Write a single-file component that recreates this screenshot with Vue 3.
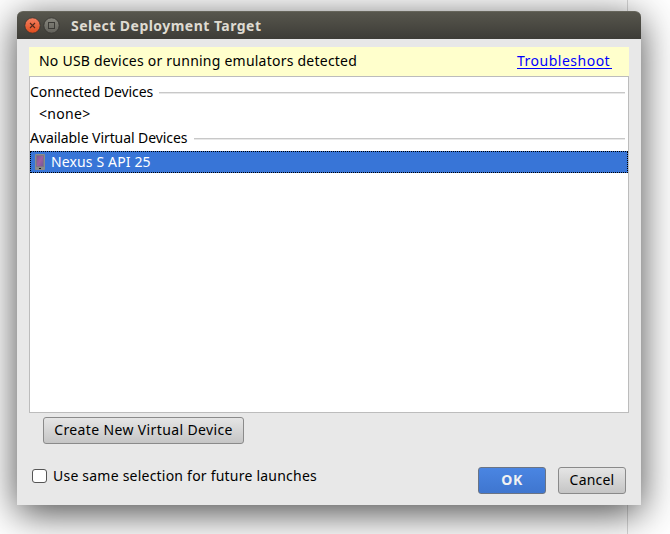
<script setup>
import { ref } from 'vue'

const reuseSelection = ref(false)
const virtualDevices = [{ name: 'Nexus S API 25', selected: true }]
</script>

<template>
  <main class="desktop">
    <section class="window" role="dialog" aria-labelledby="title">
      <header class="titlebar">
        <svg class="control" viewBox="0 0 17 17">
          <defs>
            <linearGradient id="closeFill" x1="0" y1="0" x2="0" y2="1">
              <stop offset="0" stop-color="#f58162" />
              <stop offset="1" stop-color="#df4b1b" />
            </linearGradient>
          </defs>
          <circle cx="8.5" cy="8.5" r="7.7" fill="url(#closeFill)" stroke="#353430" stroke-width=".8" />
          <path d="M6 6l5 5m0-5l-5 5" stroke="#51291c" stroke-width="1.1" />
        </svg>
        <svg class="control" viewBox="0 0 17 17">
          <defs>
            <linearGradient id="maxFill" x1="0" y1="0" x2="0" y2="1">
              <stop offset="0" stop-color="#88877f" />
              <stop offset="1" stop-color="#62615a" />
            </linearGradient>
          </defs>
          <circle cx="8.5" cy="8.5" r="7.7" fill="url(#maxFill)" stroke="#353430" stroke-width=".8" />
          <rect x="5.5" y="5.5" width="6" height="6" fill="none" stroke="#3b3a36" />
        </svg>
        <h1 id="title">Select Deployment Target</h1>
      </header>

      <div class="body">
        <div class="banner">
          <span class="t-banner">No USB devices or running emulators detected</span>
          <a class="link">Troubleshoot</a>
        </div>

        <div class="list">
          <div class="group first"><span class="t-connected">Connected Devices</span><i class="rule"></i></div>
          <div class="none">&lt;none&gt;</div>
          <div class="group second"><span class="t-available">Available Virtual Devices</span><i class="rule"></i></div>
          <div v-for="d in virtualDevices" :key="d.name" class="device" :class="{ selected: d.selected }">
            <svg class="phone" viewBox="0 0 10 16">
              <defs>
                <linearGradient id="screen" x1="0" y1="0" x2="1" y2="1">
                  <stop offset="0" stop-color="#82568f" />
                  <stop offset=".5" stop-color="#a05f9f" />
                  <stop offset="1" stop-color="#76579a" />
                </linearGradient>
              </defs>
              <rect width="10" height="16" rx="1" fill="#8b8b8b" />
              <rect x="2" y="2" width="6" height="10" fill="url(#screen)" />
              <rect x="1.5" y="1.5" width="7" height="11" fill="none" stroke="#7d7388" />
              <rect x="4" y="14" width="2" height="1" fill="#111" />
            </svg>
            <span class="t-device">{{ d.name }}</span>
          </div>
        </div>

        <button class="btn create">Create New Virtual Device</button>

        <footer class="footer">
          <label class="check">
            <input v-model="reuseSelection" type="checkbox" />
            <span class="t-check">Use same selection for future launches</span>
          </label>
          <button class="btn ok">OK</button>
          <button class="btn cancel">Cancel</button>
        </footer>
      </div>
    </section>
  </main>
</template>

<style>
body {
  margin: 0;
  overflow: hidden;
}
</style>

<style scoped>
* {
  box-sizing: border-box;
}
.desktop {
  width: 670px;
  height: 534px;
  padding: 11px 29px 29px 17px;
  overflow: hidden;
  background: linear-gradient(90deg, #fff 627px, #d8d8d8 627px, #d8d8d8 628px, #fff 628px);
  font-family: "Noto Sans", "Open Sans", sans-serif;
  font-size: 14px;
  line-height: 20px;
  color: #000;
}
.window {
  width: 624px;
  height: 494px;
  border-radius: 6px 6px 0 0;
  background: #e8e8e8;
  box-shadow: 0 8px 38px rgba(0, 0, 0, 0.72);
}
.titlebar {
  display: flex;
  align-items: center;
  height: 28px;
  padding-left: 7px;
  gap: 2px;
  border-radius: 6px 6px 0 0;
  border-top: 1px solid #66655b;
  background: linear-gradient(#57564d, #3d3c37);
}
.control {
  width: 17px;
  height: 17px;
}
h1 {
  margin: 0 0 0 9px;
  font-size: 14px;
  font-weight: 700;
  line-height: 20px;
  letter-spacing: 0.47px;
  color: #dfdbd2;
}
span {
  white-space: nowrap;
}
.body {
  padding: 8px 12px 0;
}
.banner {
  display: flex;
  align-items: center;
  justify-content: space-between;
  height: 29px;
  padding: 0 17px 2px 10px;
  background: #ffffcc;
}
.t-banner {
  letter-spacing: 0.23px;
}
.link {
  width: 95px;
  height: 18px;
  margin-bottom: 1px;
  border-bottom: 1px solid #00f;
  line-height: 20px;
  letter-spacing: 0.5px;
  color: #00f;
}
.list {
  height: 337px;
  border: 1px solid #bcbcbc;
  background: #fff;
}
.group {
  display: flex;
  align-items: center;
  gap: 6px;
  height: 20px;
  padding-right: 3px;
  letter-spacing: -0.07px;
}
.group.first {
  margin-top: 5px;
}
.group.second {
  margin-top: 4px;
}
.rule {
  flex: 1;
  height: 2px;
  margin-top: 2px;
  border-top: 1px solid #c8c8c8;
  background: #e8e8e8;
}
.none {
  height: 20px;
  margin-top: 2px;
  padding-left: 9px;
  letter-spacing: 0.3px;
}
.device {
  display: flex;
  align-items: center;
  height: 22px;
  margin-top: 3px;
  padding-left: 4px;
  gap: 6px;
  border: 1px solid transparent;
  letter-spacing: 0.14px;
}
.device.selected {
  border: 1px dotted #000;
  background: #3875d7;
  color: #fff;
}
.phone {
  width: 10px;
  height: 16px;
}
.btn {
  display: flex;
  align-items: center;
  justify-content: center;
  height: 27px;
  padding: 0 0 2px;
  border: 1px solid #8a8a8a;
  border-radius: 3px;
  background: linear-gradient(#e5e5e5, #c5c5c5);
  font: inherit;
  color: #000;
}
.create {
  width: 201px;
  margin: 4px 0 0 14px;
  letter-spacing: 0.37px;
}
.footer {
  display: flex;
  align-items: center;
  height: 27px;
  margin-top: 23px;
  padding: 0 3px;
}
.check {
  display: flex;
  align-items: center;
  gap: 6px;
  margin: -9px auto 0 0;
}
.t-check {
  letter-spacing: 0.22px;
}
.check input {
  appearance: none;
  width: 15px;
  height: 14px;
  margin: 0;
  border: 1px solid #555;
  border-radius: 3px;
  background: #fff;
}
.check input:checked {
  background: #3875d7;
}
.ok {
  width: 68px;
  border-color: #6b7484;
  background: linear-gradient(#4a85e2, #3f76cf);
  font-weight: 700;
  letter-spacing: 0.6px;
  color: #f2f2f2;
}
.cancel {
  width: 68px;
  margin-left: 12px;
  letter-spacing: 0.2px;
}
</style>
